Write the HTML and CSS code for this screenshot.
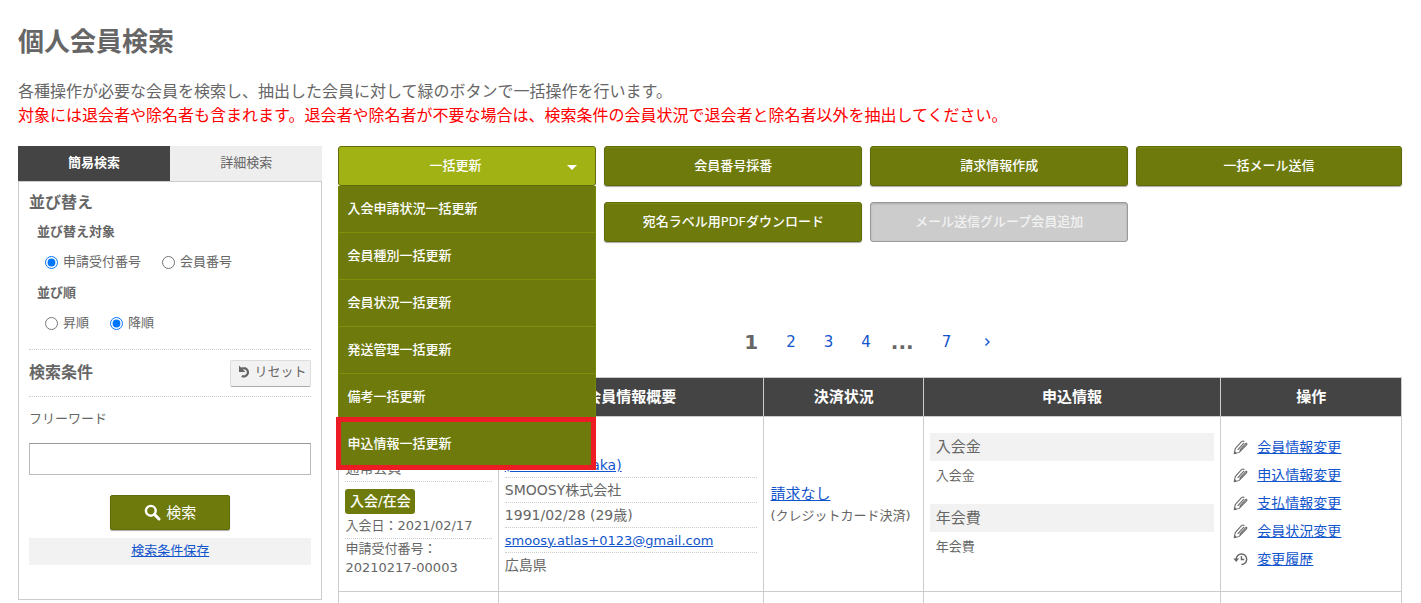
FILE: index.html
```html
<!DOCTYPE html>
<html lang="ja">
<head>
<meta charset="utf-8">
<title>個人会員検索</title>
<link rel="stylesheet" href="styles.css">
</head>
<body>
<svg class="defs" aria-hidden="true">
  <symbol id="pencil" viewBox="0 0 16 16">
    <path d="M1.2 14.8 2.4 9.2 8.8 2Q10.6.4 12.2 1.6M1.2 14.8 6.6 13.2 14.4 5.2Q15.2 3.8 14.2 3M5 10.6 11.8 3M7 11 14 3.4" fill="none" stroke="currentColor" stroke-width="1.1" stroke-linejoin="round"/>
    <path d="M1 15 1.8 11.6 4.2 14.2z" fill="currentColor"/>
  </symbol>
  <symbol id="history" viewBox="0 0 16 16">
    <path d="M3.4 7.8A5.6 5.6 0 1 1 9 13.4M9 4.2V8H12" fill="none" stroke="currentColor" stroke-width="1.5"/>
    <path d="M.4 7H6.6L3.4 10.6z" fill="currentColor"/>
  </symbol>
</svg>
<div class="page">
  <h1>個人会員検索</h1>
  <p class="lead">各種操作が必要な会員を検索し、抽出した会員に対して緑のボタンで一括操作を行います。</p>
  <p class="lead warn">対象には退会者や除名者も含まれます。退会者や除名者が不要な場合は、検索条件の会員状況で退会者と除名者以外を抽出してください。</p>

  <div class="columns">
    <aside class="sidebar">
      <div class="tabs" role="tablist">
        <button class="tab active" role="tab" aria-selected="true">簡易検索</button>
        <button class="tab" role="tab" aria-selected="false">詳細検索</button>
      </div>
      <form class="panel">
        <h2>並び替え</h2>
        <fieldset>
          <legend>並び替え対象</legend>
          <div class="radios">
            <label><input type="radio" name="key" checked>申請受付番号</label>
            <label><input type="radio" name="key">会員番号</label>
          </div>
        </fieldset>
        <fieldset>
          <legend>並び順</legend>
          <div class="radios">
            <label><input type="radio" name="order">昇順</label>
            <label><input type="radio" name="order" checked>降順</label>
          </div>
        </fieldset>
        <div class="condition">
          <h2>検索条件</h2>
          <button class="reset" type="button">
            <svg width="14" height="14" viewBox="0 0 14 14" aria-hidden="true"><path d="M3.4 3.4H7.6A3.9 3.9 0 1 1 3.8 11" fill="none" stroke="currentColor" stroke-width="2.2"/><path d="M1 .6V7H7.4z" fill="currentColor"/></svg>リセット
          </button>
        </div>
        <label class="field-label" for="freeword">フリーワード</label>
        <input class="freeword" id="freeword" type="text">
        <button class="search" type="button">
          <svg width="17" height="17" viewBox="0 0 17 17" aria-hidden="true"><circle cx="6.8" cy="6.8" r="4.9" fill="none" stroke="currentColor" stroke-width="2.4"/><path d="M10.4 10.4 15 15" stroke="currentColor" stroke-width="3" stroke-linecap="round"/></svg>検索
        </button>
        <div class="save"><a href="#">検索条件保存</a></div>
      </form>
    </aside>

    <main>
      <div class="actions">
        <div class="dropdown">
          <button class="btn open" aria-expanded="true">一括更新<span class="caret"></span></button>
          <ul class="menu">
            <li><a href="#">入会申請状況一括更新</a></li>
            <li><a href="#">会員種別一括更新</a></li>
            <li><a href="#">会員状況一括更新</a></li>
            <li><a href="#">発送管理一括更新</a></li>
            <li><a href="#">備考一括更新</a></li>
            <li class="marked"><a href="#">申込情報一括更新</a></li>
          </ul>
        </div>
        <button class="btn">会員番号採番</button>
        <button class="btn">請求情報作成</button>
        <button class="btn">一括メール送信</button>
        <button class="btn second-row">宛名ラベル用PDFダウンロード</button>
        <button class="btn" disabled>メール送信グループ会員追加</button>
      </div>

      <nav class="pager" aria-label="ページ">
        <strong>1</strong><a href="#">2</a><a href="#">3</a><a href="#">4</a><strong class="dots">...</strong><a href="#">7</a><a class="forward" href="#" aria-label="次へ"><svg width="7" height="10" viewBox="0 0 7 10" aria-hidden="true"><path d="M1.5 1.5 5 5 1.5 8.5" fill="none" stroke="currentColor" stroke-width="1.4"/></svg></a>
      </nav>

      <table>
        <colgroup><col class="c15"><col class="c25"><col class="c15"><col class="c28"><col class="c17"></colgroup>
        <thead>
          <tr><th aria-label="会員"></th><th>会員情報概要</th><th>決済状況</th><th>申込情報</th><th>操作</th></tr>
        </thead>
        <tbody>
          <tr>
            <td>
              <div class="status">
                <div class="kind">通常会員</div>
                <div><span class="badge">入会/在会</span></div>
                <div class="joined">入会日：2021/02/17</div>
                <div class="number">申請受付番号：<br>20210217-00003</div>
              </div>
            </td>
            <td>
              <ul class="profile">
                <li><a href="#">(Hanako Tanaka)</a></li>
                <li>SMOOSY株式会社</li>
                <li>1991/02/28 (29歳)</li>
                <li><a class="mail" href="#">smoosy.atlas+0123@gmail.com</a></li>
                <li>広島県</li>
              </ul>
            </td>
            <td class="payment"><a href="#">請求なし</a><div>(クレジットカード決済)</div></td>
            <td>
              <dl class="fees">
                <dt>入会金</dt><dd>入会金</dd>
                <dt>年会費</dt><dd>年会費</dd>
              </dl>
            </td>
            <td>
              <ul class="ops">
                <li><svg class="icon"><use href="#pencil"/></svg><a href="#">会員情報変更</a></li>
                <li><svg class="icon"><use href="#pencil"/></svg><a href="#">申込情報変更</a></li>
                <li><svg class="icon"><use href="#pencil"/></svg><a href="#">支払情報変更</a></li>
                <li><svg class="icon"><use href="#pencil"/></svg><a href="#">会員状況変更</a></li>
                <li><svg class="icon"><use href="#history"/></svg><a href="#">変更履歴</a></li>
              </ul>
            </td>
          </tr>
          <tr class="next"><td></td><td></td><td></td><td></td><td></td></tr>
        </tbody>
      </table>
    </main>
  </div>
</div>
</body>
</html>
```
FILE: styles.css
```css
* { box-sizing: border-box; }
body {
  margin: 0;
  background: #fff;
  color: #666;
  font: 13px/20px "DejaVu Sans", "Noto Sans CJK JP", sans-serif;
}
button, input { font: inherit; color: inherit; }
h1, h2, p, ul, dl, dd { margin: 0; padding: 0; }
ul { list-style: none; }
a { color: #1155cc; }
.defs { position: absolute; width: 0; height: 0; }

.page { padding: 25px 19px 0 18px; }
h1 { font-size: 26px; line-height: 34px; margin-bottom: 21px; }
.lead { font-size: 16px; line-height: 24px; }
.warn { color: #f00; }
.columns { display: grid; grid-template-columns: 22% 1fr; column-gap: 16px; align-items: start; margin-top: 18px; }

/* search panel */
.tabs { display: flex; }
.tab { flex: 1; height: 35px; padding: 0 0 2px; border: 0; background: #eee; }
.tab.active { background: #444; color: #fff; font-weight: bold; }
.panel { border: 1px solid #ccc; padding: 11px 10px 34px; }
h2 { font-size: 16px; line-height: 20px; }
fieldset { border: 0; margin: 9px 0 0; padding: 0 8px; }
legend { display: block; padding: 0; font-weight: bold; line-height: 20px; }
.radios { display: flex; gap: 21px; padding: 10px 0 2px 8px; }
.radios label { display: flex; align-items: center; gap: 5px; line-height: 20px; }
.radios input { width: 13px; height: 13px; margin: 0; }
.condition {
  display: flex; align-items: center; justify-content: space-between;
  height: 48px; margin-top: 14px;
  border: dotted #ccc; border-width: 1px 0;
}
.reset {
  display: flex; align-items: center; gap: 2px;
  height: 27px; padding: 0 4px 2px 7px;
  background: #f2f2f2; border: 1px solid #ddd; border-bottom-color: #aaa; border-radius: 2px;
}
.field-label { display: block; margin-top: 12px; }
.freeword { display: block; width: 100%; height: 32px; margin-top: 14px; border: 1px solid #bbb; border-top-color: #999; padding: 0 6px; }
.search {
  display: flex; align-items: center; justify-content: center; gap: 5px;
  width: 120px; height: 35px; margin: 20px auto 8px;
  background: #6e7b0c; color: #fff; font-size: 15px;
  border: 1px solid #616c08; border-radius: 2px; box-shadow: 0 1px 1px #aaa;
}
.save { background: #f2f2f2; text-align: center; padding: 3px 0 4px; }

/* bulk actions */
.actions { display: grid; grid-template-columns: repeat(4, 1fr); row-gap: 16px; }
.btn {
  height: 40px; margin-right: 8px; padding: 0;
  background: #6e7b0c; color: #fff;
  border: 1px solid #5f6b08; border-radius: 3px;
  box-shadow: 0 1px 1px #aaa, inset 0 1px 0 #7b8910;
  font-weight: 500;
}
.btn:nth-child(4) { margin-right: 0; }
.btn:disabled { background: #ccc; border-color: #999; color: #f2f2f2; box-shadow: inset 0 1px 2px #aaa; }
.second-row { grid-column: 2; }
.dropdown { position: relative; margin-right: 8px; }
.dropdown .btn { position: relative; display: block; width: 100%; margin: 0; background: #a0b214; padding-right: 24px; box-shadow: none; }
.caret {
  position: absolute; right: 18px; top: 18px;
  border: solid transparent; border-width: 5px 5px 0; border-top-color: #fff;
}
.menu { position: absolute; z-index: 2; top: 40px; left: 0; right: 0; background: #6e7b0c; border: solid #768605; border-width: 0 1px; }
.menu li + li { border-top: 1px solid #7f910c; }
.menu a { display: block; padding: 13px 8px; color: #fff; text-decoration: none; font-weight: 500; }
.menu .marked { position: relative; }
.marked::after { content: ""; position: absolute; inset: -4px -1px -3px -3px; border: 5px solid #ed1c24; pointer-events: none; }

.pager { display: flex; align-items: center; justify-content: center; height: 28px; margin: 86px 0 21px; font-size: 15px; }
.pager a, .pager strong { padding: 0 14px; text-decoration: none; }
.pager strong { font-size: 20px; }
.pager .dots { padding-left: 6px; }
.pager .forward { padding: 0 19px; }

/* member list */
table { width: 100%; table-layout: fixed; border-collapse: collapse; }
.c15 { width: 15%; }
.c25 { width: 25%; }
.c28 { width: 28%; }
.c17 { width: 17%; }
th, td { border: 1px solid #ccc; }
th { height: 39px; padding: 0; background: #444; color: #fff; font-size: 15px; }
td { height: 175px; padding: 0 6px; vertical-align: middle; }
.next td { height: 11px; border-bottom: 0; }
.status { padding-top: 25px; }
.kind { font-size: 14px; line-height: 26px; border-bottom: 1px dotted #ccc; margin-bottom: 7px; }
.badge { display: block; width: 70px; line-height: 25px; border-radius: 3px; background: #6e7b0c; color: #fff; font-size: 14px; text-align: center; font-weight: 500; }
.joined { line-height: 24px; border-bottom: 1px dotted #ccc; }
.number { line-height: 19px; padding-bottom: 2px; }
.profile { padding-top: 22px; font-size: 14px; }
.profile li { height: 25px; line-height: 24px; border-bottom: 1px dotted #ccc; }
.profile li:last-child { border: 0; }
.mail { font-size: 13px; }
.payment { padding-right: 0; }
.payment a { font-size: 15px; line-height: 24px; }
.fees dt { background: #f2f2f2; font-size: 15px; line-height: 28px; padding: 0 6px; }
.fees dd { padding: 5px 6px 18px; }
.ops { padding-bottom: 2px; }
.ops li { display: flex; align-items: center; gap: 9px; height: 28px; padding-left: 6px; font-size: 14px; }
.icon { width: 15px; height: 15px; }
```
